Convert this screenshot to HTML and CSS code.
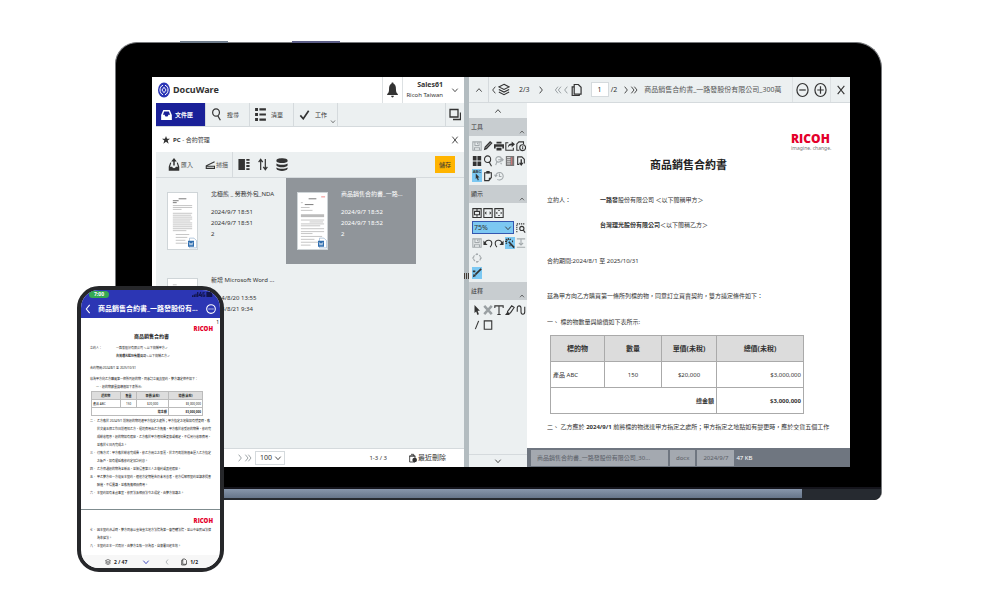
FILE: index.html
```html
<!DOCTYPE html>
<html lang="zh-Hant">
<head>
<meta charset="utf-8">
<title>DocuWare</title>
<link rel="stylesheet" href="styles.css">
</head>
<body>
<svg class="defs" aria-hidden="true">
  <symbol id="up" viewBox="0 0 12 12"><path d="M2 8.500 6 4l4 4.500" class="line"/></symbol>
  <symbol id="down" viewBox="0 0 12 12"><path d="M2 4l4 4.500 4-4.500" class="line"/></symbol>
  <symbol id="left" viewBox="0 0 12 12"><path d="M8 1 4 6l4 5" class="line"/></symbol>
  <symbol id="right" viewBox="0 0 12 12"><path d="M4 1l4 5-4 5" class="line"/></symbol>
  <symbol id="left2" viewBox="0 0 12 12"><path d="M6 1 2 6l4 5M10.500 1l-4 5 4 5" class="line"/></symbol>
  <symbol id="right2" viewBox="0 0 12 12"><path d="M2 1l4 5-4 5M6.500 1l4 5-4 5" class="line"/></symbol>
  <symbol id="close" viewBox="0 0 12 12"><path d="M2 1l8 10M10 1 2 11" class="line"/></symbol>
  <symbol id="logo" viewBox="0 0 24 30"><ellipse cx="12" cy="15" rx="12" ry="15" fill="#2b35b5"/><path d="M10 5.500C5.500 7 4 11 4 15s2 8 6 9.500M14 5.500c4.500 1.500 6 5.500 6 9.500s-2 8-6 9.500" fill="none" stroke="#fff" stroke-width="2"/><path d="M12 9.500 16 15l-4 5.500L8 15z" fill="none" stroke="#fff" stroke-width="1.800"/></symbol>
  <symbol id="bell" viewBox="0 0 20 30"><path d="M10 1c1.500 0 2 1 2 2.500 3.500 1.500 4.500 5 4.500 10 0 5 1 7 3.500 9v2H0v-2c2.500-2 3.500-4 3.500-9 0-5 1-8.500 4.500-10C8 2 8.500 1 10 1zM7.500 26h5c0 4-5 4-5 0z"/></symbol>
  <symbol id="inbox" viewBox="0 0 30 28"><path fill-rule="evenodd" d="M6 0h18l6 14v14H0V14zM8.500 4 5 13h5c0 7 10 7 10 0h5L21.500 4z"/></symbol>
  <symbol id="search" viewBox="0 0 12 14"><ellipse cx="5.500" cy="4.800" rx="3.700" ry="4" class="line"/><path d="M7.500 8.500l2.700 4.700" class="line"/></symbol>
  <symbol id="list" viewBox="0 0 30 36"><path d="M0 0h8v8H0zM12 1h18v6H12zM0 14h8v8H0zM12 15h18v6H12zM0 28h8v8H0zM12 29h18v6H12z"/></symbol>
  <symbol id="check" viewBox="0 0 12 12"><path d="M1 6.500 4.500 10.500 11 1" class="thick"/></symbol>
  <symbol id="windows" viewBox="0 0 12 12"><path d="M1 1h8v7.500H1zM4 11h7.500V4" class="line"/></symbol>
  <symbol id="star" viewBox="0 0 12 12"><path d="M6 0l1.600 4H12L8.500 6.800 10 11.500 6 8.600 2 11.500 3.500 6.800 0 4h4.400z"/></symbol>
  <symbol id="import" viewBox="0 0 12 14"><path d="M2.500 5 1 9.500V13h10V9.500L9.500 5" class="line"/><path d="M1 9.500h3c.5 2 3.500 2 4 0h3V13H1zM6 0l3 3.800H3zM5.200 3h1.600v5H5.200z"/></symbol>
  <symbol id="scan" viewBox="0 0 12 10"><path d="M11.500 1 1.500 6v3h10V6.500H2" class="line"/></symbol>
  <symbol id="panel" viewBox="0 0 12 14"><path d="M0 1h7v12H0zM8.500 1H12v2H8.500zM8.500 4.300H12v2H8.500zM8.500 7.600H12v2H8.500zM8.500 11H12v2H8.500z"/></symbol>
  <symbol id="sort" viewBox="0 0 12 14"><path d="M3.500 13V1.500M1.300 4.500l2.200-3 2.200 3M8.500 1v11.500M6.300 9.500l2.200 3 2.200-3" class="line"/></symbol>
  <symbol id="db" viewBox="0 0 12 14"><path d="M0 2.500C0-.5 12-.5 12 2.500v1C12 6 0 6 0 3.500zM0 5.800c2 2 10 2 12 0V8c-1 2.500-11 2.500-12 0zM0 10.200c2 2 10 2 12 0v1.500c-1 3-11 3-12 0z"/></symbol>
  <symbol id="layers" viewBox="0 0 14 14"><path d="M7 1l6 3-6 3-6-3zM1 7l6 3 6-3M1 10l6 3 6-3" class="line"/></symbol>
  <symbol id="pages" viewBox="0 0 12 14"><path d="M3.500 1H8l3 3v7.500H3.500zM3.500 3.500H1.300V13H9v-1.500" class="line"/></symbol>
  <symbol id="minus" viewBox="0 0 14 16"><ellipse cx="7" cy="8" rx="6" ry="7" class="line"/><path d="M3.500 8h7" class="line"/></symbol>
  <symbol id="plus" viewBox="0 0 14 16"><ellipse cx="7" cy="8" rx="6" ry="7" class="line"/><path d="M3.500 8h7M7 4v8" class="line"/></symbol>
  <symbol id="save" viewBox="0 0 12 12"><path d="M1 1h10v10H1zM3.500 1v4.500h5V1M3 11V8h6v3M6.500 2v2" class="line"/></symbol>
  <symbol id="pencil" viewBox="0 0 12 12"><path d="M1 11l1-4L8.500 0l3 2.500L4.500 10zM3 7l2 2" /><path d="M3 8.500 9.500 2" stroke="#ecf0f1" stroke-width=".7"/></symbol>
  <symbol id="print" viewBox="0 0 12 12"><path d="M3 1h6v2H3zM0 4h12v5h-2V7H2v2H0zM3 8h6v3.500H3z"/></symbol>
  <symbol id="share" viewBox="0 0 12 12"><path d="M4 2H1v9h9V8" class="line"/><path d="M3.500 8C3.500 5 5 3 8 3V.5L12 4 8 7.500V5C6 5 4.500 6 3.500 8z"/></symbol>
  <symbol id="info" viewBox="0 0 12 12"><path d="M4 11H1V3.500L3.500 1H9v3" class="line"/><circle cx="8" cy="8" r="3.500" class="line"/><path d="M8 6v.8M8 7.500V10" class="line"/></symbol>
  <symbol id="tiles" viewBox="0 0 12 12"><path d="M1 0h4.500v5.500H1zM6.500 0H11v5.500H6.500zM1 6.500h4.500V12H1zM6.500 6.500H11V12H6.500z"/></symbol>
  <symbol id="searchgo" viewBox="0 0 12 12"><circle cx="5.500" cy="4" r="3.300" class="line"/><path d="M3.500 7 2 11M5 4.500h6M9 2.500l2 2-2 2M8 8l1 2" class="line"/></symbol>
  <symbol id="form" viewBox="0 0 12 12"><path d="M1 0h10v12H1z" fill="#777"/><path d="M2.500 2h4M2.500 4.500h4M2.500 7h4M2.500 9.500h4" stroke="#fff"/><path d="M8 1.500v9" stroke="#c77" stroke-width="1.500"/></symbol>
  <symbol id="pagedown" viewBox="0 0 12 12"><path d="M4 10H2V1h5l3 3v5" class="line"/><path d="M5.500 4h1.600v4H9L6.300 12 3.500 8h2z"/></symbol>
  <symbol id="clip" viewBox="0 0 12 12"><path d="M2 2h8v6l-3 3.500H2z" class="line"/><path d="M4 0h4v3H4zM7 8h3l-3 3.500z"/></symbol>
  <symbol id="history" viewBox="0 0 12 12"><path d="M2 6a4.500 4.500 0 1 1 2 4M.5 4.500 2 6.500l2-1.500M6.500 3v3.500h2.500" class="line"/></symbol>
  <symbol id="pointer" viewBox="0 0 12 12"><path d="M3 0v9.500l2-1.700L6.500 12l1.800-1L6.700 7H9.500z"/></symbol>
  <symbol id="fitpage" viewBox="0 0 12 12"><path d="M1 .7h10v10.600H1zM3 4h6v4H3zM6 1.500V4M6 8v2.500" class="line"/></symbol>
  <symbol id="fitwidth" viewBox="0 0 12 12"><path d="M1 .7h10v10.600H1z" class="line"/><path d="M2 6l2-2v4zM10 6 8 4v4z"/></symbol>
  <symbol id="fitall" viewBox="0 0 12 12"><path d="M1 .7h10v10.600H1z" class="line"/><path d="M2 6l2-1.500v3zM10 6 8 4.500v3zM6 2 4.700 3.500h2.600zM6 10 4.700 8.500h2.600z"/></symbol>
  <symbol id="zoomarea" viewBox="0 0 12 12"><path d="M1 11V1h10" class="line" stroke-dasharray="1.500 1"/><circle cx="7" cy="6.500" r="2.500" class="line"/><path d="M8.800 8.500 11 11.500" class="line"/></symbol>
  <symbol id="undo" viewBox="0 0 12 12"><path d="M2.500 6C4 1 11 2 10.500 7c0 2-1 3-2 4" class="line"/><path d="M.5 3v5.500h5z"/></symbol>
  <symbol id="redo" viewBox="0 0 12 12"><path d="M9.500 6C8 1 1 2 1.500 7c0 2 1 3 2 4" class="line"/><path d="M11.500 3v5.500h-5z"/></symbol>
  <symbol id="wand" viewBox="0 0 12 12"><path d="M4.500 4.500 11 11.500" class="thick"/><path d="M4 0v2.500M0 4h2.500M1 1l2 2M7 1 5.500 2.500M1 7l1.500-1.500M9 3v2M6 8v2" class="line"/></symbol>
  <symbol id="align" viewBox="0 0 12 12"><path d="M1 1h10M6 1v8M3.500 6 6 8.500 8.500 6M1 11h10" class="line"/></symbol>
  <symbol id="ring" viewBox="0 0 12 12"><circle cx="6" cy="6" r="4.300" class="line" stroke-dasharray="3 1.500"/><path d="M6 0v2.500M6 9.500V12M0 6h2.500M9.500 6H12" class="line"/></symbol>
  <symbol id="brush" viewBox="0 0 12 12"><path d="M4 8 11 1" class="thick"/><path d="M1 3h3v2H1zM2 7l3 2.500L1 11z"/></symbol>
  <symbol id="cross" viewBox="0 0 12 12"><path d="M1.500 1l9 10M10.500 1l-9 10" stroke="#9aa0a3" stroke-width="3"/></symbol>
  <symbol id="text" viewBox="0 0 12 12"><path d="M1 3.500V1h10v2.500M6 1v10.500M4 11.300h4" class="line"/></symbol>
  <symbol id="marker" viewBox="0 0 12 12"><path d="M3 8 8 1l3 2-4.500 6.500L3 10z" class="line"/><path d="M0 12l3-4 3 2.500L5 12z"/></symbol>
  <symbol id="wave" viewBox="0 0 12 12"><path d="M1.500 8V4c0-4 4.500-4 4.500 0v4c0 4 4.500 4 4.500 0V2" class="line"/></symbol>
  <symbol id="slash" viewBox="0 0 12 12"><path d="M8 1 4 11" class="line"/></symbol>
  <symbol id="rect" viewBox="0 0 12 12"><path d="M1.500 1h9v10h-9z" class="line"/></symbol>
  <symbol id="trash" viewBox="0 0 12 14"><path d="M1 4h8v9H1zM3 1.500h4V4M.5 4h9" class="line"/><circle cx="8.500" cy="10" r="3.500"/></symbol>
  <symbol id="word" viewBox="0 0 12 14"><path d="M2 .5h6l3.500 3.500v9.500H2z" fill="#fff" stroke="#9cb8d4"/><path d="M0 4h8v8H0z" fill="#2f6eaf"/><path d="M1.500 6 2.700 10 4 7l1.300 3L6.500 6" fill="none" stroke="#fff" stroke-width=".8"/></symbol>
  <symbol id="more" viewBox="0 0 12 12"><circle cx="6" cy="6" r="5.200" class="line"/><path d="M3 5.300h1.400v1.400H3zM5.300 5.300h1.400v1.400H5.300zM7.600 5.300H9v1.400H7.600z"/></symbol>
  <symbol id="signal" viewBox="0 0 26 8"><path d="M0 5h1.500v2H0zM2 4h1.500v3H2zM4 3h1.500v4H4zM6 1h1.500v6H6zM17 1h7v6h-7z"/><path d="M10.500 1 8.500 5h3M11 3v4M15 2h-2v4h2V4" class="line"/></symbol>
</svg>

<main class="stage">
  <div class="tablet">
    <div class="keys"><span class="key"></span><span class="key key-b"></span></div>
    <div class="screen">

      <section class="cabinet">
        <header class="brandbar">
          <svg class="logo"><use href="#logo"/></svg>
          <h1 class="brand">DocuWare</h1>
          <button class="bell" aria-label="通知"><svg class="bell-icon"><use href="#bell"/></svg></button>
          <button class="user"><span class="user-name"><b class="user-id">Sales61</b><span>Ricoh Taiwan</span></span><svg class="i8"><use href="#down"/></svg></button>
        </header>
        <nav class="tabs">
          <button class="tab tab-on"><svg class="tab-icon short"><use href="#inbox"/></svg>文件匣</button>
          <button class="tab"><svg class="tab-icon"><use href="#search"/></svg>搜尋</button>
          <button class="tab"><svg class="tab-icon"><use href="#list"/></svg>清單</button>
          <button class="tab"><svg class="tab-icon short"><use href="#check"/></svg>工作<svg class="tab-more"><use href="#down"/></svg></button>
          <button class="tab-end" aria-label="視窗"><svg class="i12"><use href="#windows"/></svg></button>
        </nav>
        <div class="crumb">
          <svg class="i8"><use href="#star"/></svg><span><b>PC</b> - 合約管理</span>
          <button class="crumb-close" aria-label="關閉"><svg class="i8"><use href="#close"/></svg></button>
        </div>
        <div class="toolbar">
          <button class="tool"><svg class="i12"><use href="#import"/></svg>匯入</button>
          <button class="tool"><svg class="i10"><use href="#scan"/></svg>掃描</button>
          <span class="tool-group">
            <button class="plain" aria-label="面板"><svg class="i12"><use href="#panel"/></svg></button>
            <button class="plain" aria-label="排序"><svg class="i12"><use href="#sort"/></svg></button>
            <button class="plain" aria-label="資料"><svg class="i12"><use href="#db"/></svg></button>
          </span>
          <button class="store">儲存</button>
        </div>
        <div class="files">
          <article class="file">
            <div class="thumb"><svg class="thumb-page" viewBox="0 0 30 58" preserveAspectRatio="none"><path d="M11 6h8M5 8h6M5 10h4" stroke="#777"/><path d="M5 13h20M5 15h20M5 17h9M5 21h20M5 23h19M5 25h20M5 27h20M5 29h18M5 31h20M5 33h20M5 35h20M5 37h20M5 39h14M8 43h14M8 46h12M8 49h10M8 52h12" stroke="#c4c4c4"/></svg><svg class="word"><use href="#word"/></svg></div>
            <div class="meta"><h2 class="file-name">北極熊 _ 勞務外包_NDA</h2><p>2024/9/7 18:51</p><p>2024/9/7 18:51</p><p>2</p></div>
          </article>
          <article class="file file-on">
            <div class="thumb"><svg class="thumb-page" viewBox="0 0 30 58" preserveAspectRatio="none"><path d="M24 4h4" stroke="#e88"/><path d="M11 6h8M7 12h9" stroke="#777"/><path d="M3 22h24v3H3z" fill="#bbb"/><path d="M3 10h2M3 15h9M3 18h12M3 28h24M12 30h14M3 32h24M3 34h20M3 37h24M3 40h24M3 42h12M3 45h22M3 48h14M3 51h18M3 54h10" stroke="#c4c4c4"/></svg><svg class="word"><use href="#word"/></svg></div>
            <div class="meta"><h2 class="file-name">商品銷售合約書_一路...</h2><p>2024/9/7 18:52</p><p>2024/9/7 18:52</p><p>2</p></div>
          </article>
          <article class="file">
            <div class="thumb"><svg class="thumb-page" viewBox="0 0 30 58" preserveAspectRatio="none"><path d="M5 6h4M5 9h20" stroke="#c4c4c4"/></svg></div>
            <div class="meta"><h2 class="file-name">新增 Microsoft Word ...</h2><p>2024/8/20 13:55</p><p>2024/8/21 9:34</p></div>
          </article>
        </div>
        <footer class="pager">
          <button class="plain dim" aria-label="下一頁"><svg class="i8"><use href="#right"/></svg></button>
          <button class="plain dim" aria-label="最後一頁"><svg class="i8"><use href="#right2"/></svg></button>
          <label class="pick"><select class="pick-box" aria-label="每頁筆數"><option>100</option></select><svg class="i8"><use href="#down"/></svg></label>
          <span class="count">1-3 / 3</span>
          <button class="recent"><svg class="i8"><use href="#trash"/></svg>最近刪除</button>
        </footer>
      </section>

      <div class="splitter"><span class="grip"></span></div>

      <section class="viewer">
        <header class="viewbar">
          <button class="fold" aria-label="收合"><svg class="i8"><use href="#up"/></svg></button>
          <button class="plain" aria-label="上一份"><svg class="i8"><use href="#left"/></svg></button>
          <svg class="i12"><use href="#layers"/></svg>
          <span class="step">2/3</span>
          <button class="plain" aria-label="下一份"><svg class="i8"><use href="#right"/></svg></button>
          <span class="back"><button class="plain dim" aria-label="第一頁"><svg class="i8"><use href="#left2"/></svg></button><button class="plain dim" aria-label="上一頁"><svg class="i8"><use href="#left"/></svg></button></span>
          <svg class="page-icon"><use href="#pages"/></svg>
          <input class="page-no" value="1" aria-label="頁碼">
          <span class="of">/2</span>
          <button class="plain" aria-label="下一頁"><svg class="i8"><use href="#right"/></svg></button><button class="plain" aria-label="最後一頁"><svg class="i8"><use href="#right2"/></svg></button>
          <h2 class="view-title">商品銷售合約書_一路發股份有限公司_300萬</h2>
          <span class="zooms"><button class="plain" aria-label="縮小"><svg class="i14"><use href="#minus"/></svg></button><button class="plain" aria-label="放大"><svg class="i14"><use href="#plus"/></svg></button></span>
          <button class="shut" aria-label="關閉"><svg class="i10"><use href="#close"/></svg></button>
        </header>

        <div class="work">
          <aside class="tools">
            <button class="scroll-up" aria-label="向上"><svg class="i8"><use href="#up"/></svg></button>
            <h3 class="group">工具<svg class="i6"><use href="#up"/></svg></h3>
            <div class="icons">
              <svg class="ic mute"><use href="#save"/></svg><svg class="ic"><use href="#pencil"/></svg><svg class="ic"><use href="#print"/></svg><svg class="ic"><use href="#share"/></svg><svg class="ic"><use href="#info"/></svg>
              <svg class="ic"><use href="#tiles"/></svg><svg class="ic"><use href="#search"/></svg><svg class="ic mute"><use href="#searchgo"/></svg><svg class="ic"><use href="#form"/></svg><svg class="ic"><use href="#pagedown"/></svg>
              <span class="abc">ABC<svg class="abc-arrow"><use href="#pointer"/></svg></span><svg class="ic"><use href="#clip"/></svg><svg class="ic mute"><use href="#history"/></svg>
            </div>
            <h3 class="group">顯示<svg class="i6"><use href="#up"/></svg></h3>
            <div class="icons">
              <svg class="ic"><use href="#fitpage"/></svg><svg class="ic"><use href="#fitwidth"/></svg><svg class="ic"><use href="#fitall"/></svg>
              <label class="zoom"><select class="zoom-box" aria-label="縮放"><option>75%</option></select><svg class="i8"><use href="#down"/></svg></label><svg class="ic"><use href="#zoomarea"/></svg>
              <svg class="ic mute"><use href="#save"/></svg><svg class="ic"><use href="#undo"/></svg><svg class="ic"><use href="#redo"/></svg><svg class="ic on"><use href="#wand"/></svg><svg class="ic mute"><use href="#align"/></svg>
              <svg class="ic mute wide"><use href="#ring"/></svg>
              <svg class="ic on"><use href="#brush"/></svg>
            </div>
            <h3 class="group">註釋<svg class="i6"><use href="#up"/></svg></h3>
            <div class="icons">
              <svg class="ic"><use href="#pointer"/></svg><svg class="ic"><use href="#cross"/></svg><svg class="ic"><use href="#text"/></svg><svg class="ic"><use href="#marker"/></svg><svg class="ic"><use href="#wave"/></svg>
              <svg class="ic"><use href="#slash"/></svg><svg class="ic"><use href="#rect"/></svg>
            </div>
            <button class="scroll-down" aria-label="向下"><svg class="i8"><use href="#down"/></svg></button>
          </aside>

          <div class="doc">
            <div class="paper">
              <div class="ricoh"><b class="ricoh-name">RICOH</b><span class="ricoh-tag">imagine. change.</span></div>
              <h2 class="paper-title">商品銷售合約書</h2>
              <dl class="party">
                <dt>立約人：</dt><dd><b>一路發</b>股份有限公司 ＜以下簡稱甲方＞</dd>
                <dd><b>台灣理光股份有限公司</b>＜以下簡稱乙方＞</dd>
              </dl>
              <p class="term">合約期間:2024/8/1 至 2025/10/31</p>
              <p class="intro">茲為甲方向乙方購買第一條所列標的物，同意訂立買賣契約，雙方議定條件如下：</p>
              <p class="clause">一、 標的物數量與總價如下表所示:</p>
              <table class="goods">
                <colgroup><col class="c1"><col class="c2"><col class="c3"><col></colgroup>
                <tr><th>標的物</th><th>數量</th><th>單價(未稅)</th><th>總價(未稅)</th></tr>
                <tr><td>產品 ABC</td><td class="mid">150</td><td class="mid">$20,000</td><td class="end">$3,000,000</td></tr>
                <tr class="total"><td colspan="3" class="end">總金額</td><td class="end">$3,000,000</td></tr>
              </table>
              <p class="clause">二、 乙方應於 <b>2024/9/1</b> 前將標的物送達甲方指定之處所；甲方指定之地點如有變更時，應於交貨五個工作</p>
            </div>
            <footer class="status">
              <span class="chip chip-name">商品銷售合約書_一路發股份有限公司_30...</span><span class="chip">docx</span><span class="chip">2024/9/7</span><span class="size">47 KB</span>
            </footer>
          </div>
        </div>
      </section>
    </div>
    <div class="base"><span class="hinge"></span></div>
  </div>

  <div class="phone">
    <div class="phone-status"><span class="clock">7:00</span><svg class="signal"><use href="#signal"/></svg></div>
    <header class="phone-bar"><svg class="i10"><use href="#left"/></svg><h2 class="phone-title">商品銷售合約書_一路發股份有...</h2><svg class="i10"><use href="#more"/></svg></header>
    <div class="sheet">
      <span class="sheet-no">1</span>
      <b class="mini-ricoh">RICOH</b>
      <h3 class="sheet-title">商品銷售合約書</h3>
      <dl class="mini-party"><dt>立約人：</dt><dd>一路發股份有限公司 ＜以下簡稱甲方＞</dd><dd><b>台灣理光股份有限公司</b>＜以下簡稱乙方＞</dd></dl>
      <p class="mini-term">合約期間:2024/8/1 至 2025/10/31</p>
      <p class="mini-intro">茲為甲方向乙方購買第一條所列標的物，同意訂立買賣契約，雙方議定條件如下：</p>
      <p class="mini-one">一、標的物數量與總價如下表所示:</p>
      <table class="mini-goods">
        <tr><th>標的物</th><th>數量</th><th>單價(未稅)</th><th>總價(未稅)</th></tr>
        <tr><td>產品 ABC</td><td class="mid">150</td><td class="mid">$20,000</td><td class="end">$3,000,000</td></tr>
        <tr class="total"><td colspan="3" class="end">總金額</td><td class="end">$3,000,000</td></tr>
      </table>
      <ul class="rules">
        <li><span>二、</span><span>乙方應於 2024/9/1 前將標的物送達甲方指定之處所；甲方指定之地點如有變更時，應於交貨五個工作日前通知乙方，運送費用由乙方負擔，甲方應於收受標的物後，依約完成驗收程序。標的物如有瑕疵，乙方應於甲方通知後更換或補足，不得另行收取費用，並應於七日內完成之。</span></li>
        <li><span>三、</span><span>付款方式：甲方應於驗收完成後，依乙方開立之發票，於次月底前將價金匯入乙方指定之帳戶，如有遲延應依約定加計利息。</span></li>
        <li><span>四、</span><span>乙方保證標的物為全新品，並無侵害第三人之權利或其他瑕疵。</span></li>
        <li><span>五、</span><span>甲乙雙方任一方違反本契約，經他方定期催告仍未改善者，他方得解除契約並請求損害賠償，不得異議，並應負擔相關費用。</span></li>
        <li><span>六、</span><span>本契約如有未盡事宜，依民法及相關法令之規定，由雙方協議之。</span></li>
      </ul>
    </div>
    <div class="sheet sheet-next">
      <b class="mini-ricoh">RICOH</b>
      <ul class="rules">
        <li><span>七、</span><span>因本契約涉訟時，雙方同意以臺灣臺北地方法院為第一審管轄法院，並以中華民國法律為準據法。</span></li>
        <li><span>八、</span><span>本契約正本一式兩份，由雙方各執一份為憑，自簽署日起生效。</span></li>
      </ul>
    </div>
    <footer class="phone-foot"><svg class="i6"><use href="#layers"/></svg><b>2 / 47</b><svg class="i8 blue"><use href="#down"/></svg><svg class="i6 dim"><use href="#left"/></svg><svg class="i6"><use href="#pages"/></svg><b>1/2</b></footer>
  </div>
</main>
</body>
</html>
```
FILE: styles.css
```css
* { box-sizing: border-box; }
body, h1, h2, h3, p, dl, dd, ul { margin: 0; padding: 0; }
body {
  background: #fff;
  color: #333;
  font-family: "Noto Sans", "Noto Sans CJK TC", sans-serif;
  font-size: 7px;
  line-height: 10px;
}
h1, h2, h3 { font-weight: 400; font-size: inherit; }
button, input, select { font: inherit; color: inherit; border: 0; background: none; padding: 0; margin: 0; }
ul { list-style: none; }
svg { display: block; flex: none; fill: currentColor; }
.defs { position: absolute; width: 0; height: 0; }
.line { fill: none; stroke: currentColor; stroke-width: 1.300; }
.thick { fill: none; stroke: currentColor; stroke-width: 2; }
.i6 { width: 6px; height: 8px; }
.i8 { width: 8px; height: 10px; }
.i10 { width: 10px; height: 10px; }
.i12 { width: 12px; height: 13px; }
.i14 { width: 13px; height: 16px; }
.plain { display: flex; }
.dim { color: #8e9599; }
.blue { color: #2b35b5; }
.mid { text-align: center; }
.end { text-align: right; }

.stage { position: relative; padding: 42px 118px 100px 115px; }

/* Tablet */
.tablet {
  position: relative;
  background: #000;
  border: 1px solid #77797c;
  border-bottom: 0;
  border-radius: 22px 26px 8px 8px;
  padding: 34px 31px 0 36px;
}
.keys { position: absolute; top: -2px; left: 64px; display: flex; gap: 64px; }
.key { width: 48px; height: 2px; background: #6f7c8b; }
.key-b { background: #5b5d86; }
.screen { display: grid; grid-template-columns: 312fr 5px 381fr; background: #ecf0f1; }
.base { margin: 20px -31px 0 -36px; height: 13px; background: #262a30; border-top: 2px solid #15151c; border-radius: 0 0 8px 8px; padding-right: 79px; }
.hinge { display: block; height: 9px; background: linear-gradient(#8796ab, #66758a); }

/* File cabinet */
.cabinet { display: flex; flex-direction: column; min-width: 0; border-left: 4px solid #fff; }
.brandbar { display: flex; align-items: stretch; height: 26px; background: #fff; padding-left: 2px; }
.logo { width: 12px; height: 16px; align-self: center; }
.brand { flex: 1; align-self: center; margin-left: 3px; font-size: 9px; line-height: 14px; font-weight: 700; }
.bell { width: 20px; border-left: 1px solid #dde1e3; display: flex; align-items: center; justify-content: center; }
.bell-icon { width: 11px; height: 16px; }
.user { width: 62px; border-left: 1px solid #dde1e3; display: flex; align-items: center; justify-content: flex-end; gap: 8px; padding-right: 5px; }
.user-name { display: flex; flex-direction: column; text-align: right; font-size: 6px; line-height: 11px; white-space: nowrap; }
.user-id { font-size: 7px; }
.tabs { display: flex; height: 24px; background: #ecf0f1; border-bottom: 1px solid #d5dadd; }
.tab { display: flex; align-items: center; gap: 5px; width: 44px; padding-left: 5px; border-right: 1px solid #d5dadd; font-size: 6px; position: relative; white-space: nowrap; }
.tab-on { width: 50px; background: #1a2098; color: #fff; gap: 3px; font-weight: 700; }
.tab-icon { width: 11px; height: 13px; }
.short { height: 10px; }
.tab-more { position: absolute; right: 1px; bottom: 1px; width: 6px; height: 7px; }
.tab-end { margin-left: auto; width: 19px; border-left: 1px solid #d5dadd; display: flex; align-items: center; justify-content: center; }
.crumb { display: flex; align-items: center; gap: 3px; height: 25px; background: #fff; padding: 0 5px 0 6px; font-size: 6px; }
.crumb-close { margin-left: auto; }
.toolbar { display: flex; align-items: center; height: 26px; border-bottom: 1px solid #d5dadd; padding: 0 9px 0 12px; }
.tool { display: flex; align-items: center; gap: 1px; margin-right: 12px; font-size: 6px; color: #555; }
.tool svg { color: #333; }
.tool-group { display: flex; gap: 7px; align-items: center; align-self: stretch; border-left: 1px solid #d5dadd; padding-left: 5px; margin-left: -8px; }
.store { margin-left: auto; width: 20px; height: 17px; background: #ffb400; font-size: 6px; }
.files { flex: 1; display: grid; grid-template-columns: repeat(auto-fill, 130px); grid-auto-rows: 86px; align-content: start; overflow: hidden; padding-bottom: 90px; }
.file { display: flex; align-items: flex-start; gap: 13px; padding: 14px 0 0 11px; white-space: nowrap; overflow: hidden; }
.file-on { background: #90959a; color: #fff; }
.thumb { position: relative; flex: none; width: 31px; height: 58px; background: #fff; border: 1px solid #cfd5d8; }
.thumb-page { width: 29px; height: 56px; }
.word { position: absolute; right: 0; bottom: 0; width: 9px; height: 12px; }
.meta { font-size: 6px; line-height: 11px; padding-top: 1px; }
.meta .file-name { margin-top: -4px; margin-bottom: 7px; }
.pager { display: flex; align-items: center; height: 19px; background: #fff; border-top: 1px solid #d5dadd; padding: 0 18px 0 80px; }
.pick { display: flex; align-items: center; width: 30px; height: 14px; margin-left: 3px; padding: 0 2px 0 4px; border: 1px solid #d5dadd; }
.pick-box, .zoom-box { appearance: none; flex: 1; min-width: 0; }
.count { margin-left: auto; font-size: 6px; }
.recent { display: flex; align-items: center; gap: 1px; margin-left: 22px; white-space: nowrap; }

.splitter { background: #b3bcc0; display: flex; align-items: center; }
.grip { width: 5px; height: 6px; margin-top: 8px; background: repeating-linear-gradient(90deg, #443c36 0 1px, #b3bcc0 1px 2px); }

/* Viewer */
.viewer { display: flex; flex-direction: column; min-width: 0; }
.viewbar { display: flex; align-items: center; height: 26px; border-bottom: 1px solid #d5dadd; white-space: nowrap; }
.fold { display: flex; align-items: center; justify-content: center; align-self: stretch; width: 20px; border-right: 1px solid #d5dadd; margin-right: 1px; }
.step { margin: 0 7px 0 9px; }
.back { display: flex; margin-left: 9px; }
.page-icon { width: 11px; height: 14px; margin: 0 9px 0 1px; }
.page-no { width: 18px; height: 15px; background: #fff; border: 1px solid #d5dadd; text-align: center; }
.of { margin: 0 5px 0 2px; }
.view-title { flex: 1; margin-left: 6px; color: #555; }
.zooms { display: flex; align-items: center; align-self: stretch; gap: 5px; border: 1px solid #dde1e3; border-width: 0 1px; padding: 0 3px; }
.shut { display: flex; align-items: center; justify-content: center; width: 19px; }
.work { flex: 1; display: flex; }
.tools { width: 58px; flex: none; display: flex; flex-direction: column; }
.scroll-up { height: 15px; display: flex; align-items: center; justify-content: center; }
.scroll-down { height: 13px; display: flex; align-items: center; justify-content: center; margin-top: auto; border-top: 1px solid #d5dadd; }
.group { display: flex; align-items: center; justify-content: space-between; height: 18px; padding: 0 2px; background: #c8cdd0; font-size: 6px; }
.group svg { align-self: flex-end; }
.icons { display: grid; grid-template-columns: repeat(5, 11px); grid-auto-rows: 15px; align-items: center; padding: 2px 0 2px 3px; }
.ic { width: 10px; height: 12px; }
.mute { color: #a3a9ac; }
.on { background: #7cc8f2; }
.wide { grid-column: 1 / -1; }
.abc { width: 10px; height: 13px; background: #7cc8f2; position: relative; font: bold 4px/5px "Liberation Sans", sans-serif; text-align: center; }
.abc-arrow { position: absolute; left: 2px; top: 4px; width: 7px; height: 8px; }
.zoom { grid-column: 1 / 5; display: flex; align-items: center; width: 42px; height: 13px; padding: 0 1px; background: #7cc8f2; border: 1px solid #3557b0; }

.doc { flex: 1; min-width: 0; display: flex; flex-direction: column; background: #fff; }
.paper { flex: 1; padding: 29px 20px 16px 20px; font-size: 6px; }
.paper p { white-space: nowrap; overflow: hidden; }
.ricoh { display: flex; flex-direction: column; width: 39px; margin-left: auto; }
.ricoh-name { color: #e4002b; font: 800 12px/13px "Open Sans", sans-serif; }
.ricoh-tag { color: #777; font-size: 5px; line-height: 6px; white-space: nowrap; }
.paper-title { margin-top: 6px; text-align: center; font-size: 11px; line-height: 16px; font-weight: 700; color: #222; }
.party { display: grid; grid-template-columns: 53px 1fr; row-gap: 15px; margin-top: 22px; }
.party dd { grid-column: 2; }
.term { margin-top: 26px; }
.intro { margin-top: 25px; }
.clause { margin: 16px -10px 0 0; }
.goods { width: 254px; margin: 8px 0 0 3px; border-collapse: collapse; table-layout: fixed; }
.goods th, .goods td { border: 1px solid #aaa; height: 26px; padding: 0 2px; }
.goods th { background: #dcdcdc; font-size: 7px; }
.c1 { width: 54px; }
.c2 { width: 57px; }
.c3 { width: 55px; }
.total { font-weight: 700; }
.goods + .clause { margin-top: 8px; }
.status { display: flex; align-items: center; gap: 2px; height: 19px; padding-left: 4px; background: #6f7680; color: #fff; font-size: 6px; white-space: nowrap; }
.chip { background: #a4a9b0; color: #5b6068; height: 16px; line-height: 16px; padding: 0 6px; }
.chip-name { width: 137px; }

/* Phone */
.phone {
  position: absolute;
  left: 77px;
  top: 286px;
  width: 147px;
  height: 286px;
  display: flex;
  flex-direction: column;
  overflow: hidden;
  background: #fff;
  border: 4px solid #26272a;
  border-radius: 22px;
  font-size: 3px;
  line-height: 8px;
  color: #222;
}
.phone-status { display: flex; justify-content: space-between; align-items: center; flex: none; height: 9px; padding: 0 6px 0 8px; background: #2c36b4; }
.clock { width: 20px; height: 7px; border-radius: 4px; background: #35a853; color: #fff; text-align: center; font-size: 5px; line-height: 7px; font-weight: 700; }
.signal { width: 22px; height: 7px; color: #11144a; }
.phone-bar { display: flex; align-items: center; flex: none; height: 19px; padding: 0 4px 0 2px; background: #2c36b4; color: #fff; }
.phone-title { flex: 1; padding-left: 5px; font-size: 7px; line-height: 10px; font-weight: 700; white-space: nowrap; }
.sheet { position: relative; padding: 8px 7px 12px 9px; border-bottom: 1px solid #7f8c8f; }
.sheet-no { position: absolute; right: 1px; top: 0; font-size: 5px; }
.mini-ricoh { display: block; text-align: right; color: #e4002b; font: 800 6px/6px "Open Sans", sans-serif; }
.sheet-title { text-align: center; font-size: 5px; line-height: 8px; font-weight: 700; margin: 0 0 4px; }
.mini-party { display: grid; grid-template-columns: 26px 1fr; }
.mini-party dd { grid-column: 2; }
.mini-term { margin-top: 4px; }
.mini-intro { margin-top: 3px; white-space: nowrap; }
.mini-one { margin-left: 6px; }
.mini-goods { width: 112px; margin: 0 0 1px 1px; border-collapse: collapse; line-height: 4px; }
.mini-goods th, .mini-goods td { border: 1px solid #bbb; height: 8px; padding: 0 1px; }
.mini-goods th { background: #ddd; }
.rules li { display: grid; grid-template-columns: 7px 1fr; }
.sheet-next { border-bottom: 0; padding-top: 8px; padding-bottom: 0; }
.sheet-next .rules { padding-top: 2px; }
.phone-foot { display: flex; align-items: center; gap: 3px; flex: none; margin-top: auto; height: 13px; padding: 0 22px 0 24px; background: #f7f7f7; font-size: 5px; line-height: 8px; }
.phone-foot .blue { margin: 0 auto; }
.phone-foot .dim { margin-right: 8px; }
```
